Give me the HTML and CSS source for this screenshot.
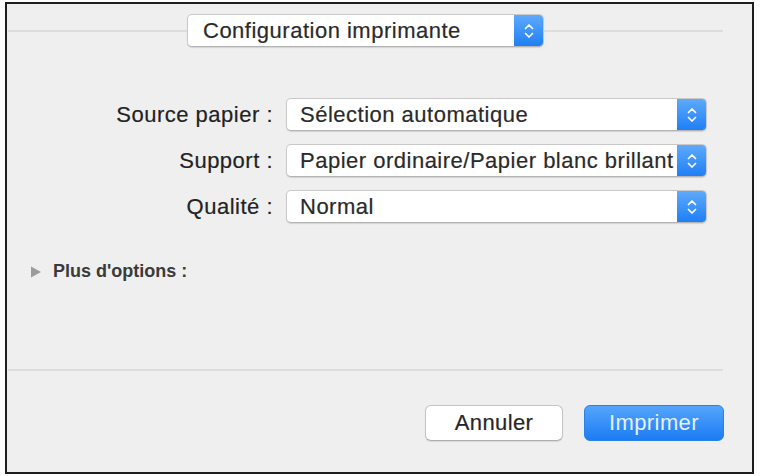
FILE: index.html
```html
<!DOCTYPE html>
<html lang="fr">
<head>
<meta charset="utf-8">
<title>Configuration imprimante</title>
<link rel="stylesheet" href="styles.css">
</head>
<body>
<div class="dialog">
  <div class="header">
    <div class="rule"></div>
    <div class="popup popup-title">
      <span class="popup-text">Configuration imprimante</span>
      <span class="stepper"><svg viewBox="0 0 12 20" width="12" height="20"><path d="M2.5 7.5 L6 4 L9.5 7.5 M2.5 12.5 L6 16 L9.5 12.5" fill="none" stroke="#fff" stroke-width="1.7" stroke-linecap="round" stroke-linejoin="round"/></svg></span>
    </div>
    <div class="rule"></div>
  </div>

  <div class="form">
    <label class="label">Source papier :</label>
    <div class="popup popup-field">
      <span class="popup-text">Sélection automatique</span>
      <span class="stepper"><svg viewBox="0 0 12 20" width="12" height="20"><path d="M2.5 7.5 L6 4 L9.5 7.5 M2.5 12.5 L6 16 L9.5 12.5" fill="none" stroke="#fff" stroke-width="1.7" stroke-linecap="round" stroke-linejoin="round"/></svg></span>
    </div>
    <label class="label">Support :</label>
    <div class="popup popup-field">
      <span class="popup-text">Papier ordinaire/Papier blanc brillant</span>
      <span class="stepper"><svg viewBox="0 0 12 20" width="12" height="20"><path d="M2.5 7.5 L6 4 L9.5 7.5 M2.5 12.5 L6 16 L9.5 12.5" fill="none" stroke="#fff" stroke-width="1.7" stroke-linecap="round" stroke-linejoin="round"/></svg></span>
    </div>
    <label class="label">Qualité :</label>
    <div class="popup popup-field">
      <span class="popup-text">Normal</span>
      <span class="stepper"><svg viewBox="0 0 12 20" width="12" height="20"><path d="M2.5 7.5 L6 4 L9.5 7.5 M2.5 12.5 L6 16 L9.5 12.5" fill="none" stroke="#fff" stroke-width="1.7" stroke-linecap="round" stroke-linejoin="round"/></svg></span>
    </div>
  </div>

  <div class="more">
    <svg class="disclosure" viewBox="0 0 12 12" width="12" height="12"><path d="M1 0.5 L11 6 L1 11.5 Z" fill="#9b9b9b"/></svg>
    <span class="more-text">Plus d'options :</span>
  </div>

  <div class="spacer"></div>
  <div class="separator"></div>

  <div class="actions">
    <button class="btn btn-cancel">Annuler</button>
    <button class="btn btn-primary">Imprimer</button>
  </div>
</div>
</body>
</html>
```

FILE: styles.css
```css
html, body {
  margin: 0;
  padding: 0;
  background: #ffffff;
}

body {
  font-family: "Liberation Sans", Arial, sans-serif;
  padding: 2px 0 0 5px;
}

.dialog {
  box-sizing: border-box;
  width: 749px;
  height: 472px;
  border: 2px solid #1e1e1e;
  background: #efefef;
  display: flex;
  flex-direction: column;
}

.header {
  display: flex;
  align-items: center;
  padding: 10px 29px 0 1px;
}

.rule {
  flex: 1;
  height: 2px;
  background: #dddddd;
}

.popup {
  box-sizing: border-box;
  display: flex;
  align-items: stretch;
  background: #ffffff;
  border: 1px solid #c9c9c9;
  border-bottom-color: #b3b3b3;
  border-radius: 5px;
  box-shadow: 0 1px 1px rgba(0, 0, 0, 0.12);
  overflow: hidden;
}

.popup-title {
  width: 357px;
  height: 33px;
}

.popup-text {
  flex: 1;
  display: flex;
  align-items: center;
  padding-left: 15px;
  font-size: 22px;
  letter-spacing: 0.5px;
  color: #2a2a2a;
  -webkit-text-stroke: 0.2px #2a2a2a;
  white-space: nowrap;
  overflow: hidden;
}

.stepper {
  width: 29px;
  display: flex;
  align-items: center;
  justify-content: center;
  background: linear-gradient(#5eaafc, #1f7ff5);
}

.form {
  display: grid;
  grid-template-columns: 266px 421px;
  column-gap: 13px;
  row-gap: 13px;
  margin-top: 51px;
}

.label {
  font-size: 22px;
  letter-spacing: 0.5px;
  color: #222222;
  -webkit-text-stroke: 0.2px #222222;
  text-align: right;
  align-self: center;
  white-space: nowrap;
}

.popup-field {
  height: 33px;
}

.popup-field .popup-text {
  padding-left: 13px;
}

.more {
  display: flex;
  align-items: center;
  margin-top: 38px;
  padding-left: 23px;
  gap: 11px;
}

.more-text {
  font-size: 18px;
  font-weight: 600;
  color: #3a3a3a;
}

.spacer {
  flex: 1;
}

.separator {
  height: 2px;
  background: #dddddd;
  margin: 0 29px 0 1px;
}

.actions {
  display: flex;
  justify-content: flex-end;
  gap: 21px;
  padding: 34px 28px 31px 0;
}

.btn {
  box-sizing: border-box;
  height: 36px;
  border-radius: 6px;
  font-family: "Liberation Sans", Arial, sans-serif;
  font-size: 22px;
  letter-spacing: 0.4px;
  padding: 0;
  cursor: default;
}

.btn-cancel {
  width: 138px;
  background: #ffffff;
  border: 1px solid #c4c4c4;
  border-bottom-color: #aeaeae;
  color: #262626;
  -webkit-text-stroke: 0.2px #262626;
  box-shadow: 0 1px 1px rgba(0, 0, 0, 0.1);
}

.btn-primary {
  width: 140px;
  background: linear-gradient(#55a5fb, #1b7cf4);
  border: 1px solid #2a7fe8;
  color: #e6f0ff;
}
```
